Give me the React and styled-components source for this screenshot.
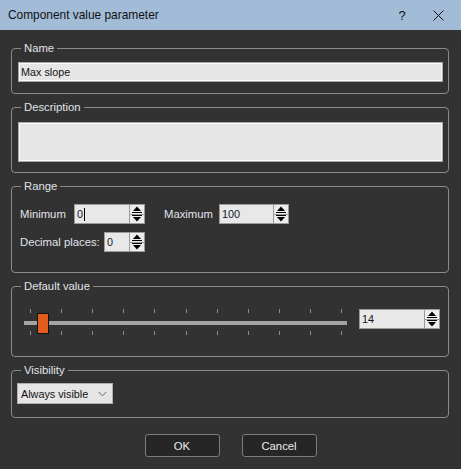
import React from "react";
import styled, { createGlobalStyle } from "styled-components";

const Global = createGlobalStyle`
  html, body {
    margin: 0;
    padding: 0;
    background: #323232;
  }
  body {
    font-family: "Liberation Sans", Arial, sans-serif;
    font-size: 11.3px;
    color: #e2e2e2;
  }
`;

const Window = styled.div`
  width: 461px;
  height: 469px;
  background: #323232;
  display: flex;
  flex-direction: column;
  overflow: hidden;
`;

const TitleBar = styled.div`
  height: 30px;
  flex: none;
  background: #a2bcd8;
  display: flex;
  align-items: center;
  padding-left: 8px;
  color: #111;
  font-size: 11.9px;
`;

const Title = styled.div`
  flex: 1;
`;

const TitleButton = styled.div`
  width: ${(p) => p.w}px;
  height: 30px;
  display: flex;
  align-items: center;
  justify-content: center;
  color: #111;
  font-size: 13px;
`;

const Body = styled.div`
  display: flex;
  flex-direction: column;
  gap: 6px;
  padding: 11px 12px 0 11px;
`;

const Group = styled.fieldset`
  margin: 0;
  min-width: 0;
  border: 1px solid #8a8a8a;
  border-radius: 4px;
  padding: ${(p) => p.pad || "7px 5px 11px 6px"};
`;

const Legend = styled.legend`
  margin-left: 3px;
  padding: 0 3px;
  line-height: 14px;
  color: #e0e4ea;
`;

const TextField = styled.div`
  box-sizing: border-box;
  height: ${(p) => p.h}px;
  background: #e6e6e6;
  border: 1px solid #a8a8a8;
  box-shadow: inset 0 0 0 1px #fbfbfb;
  color: #111;
  font-size: 10.8px;
  padding: 0 2px;
  line-height: ${(p) => p.h - 2}px;
`;

const Row = styled.div`
  display: flex;
  align-items: ${(p) => p.align || "center"};
  margin-top: ${(p) => p.top || 0}px;
`;

const FieldLabel = styled.div`
  width: ${(p) => p.w}px;
  margin-left: ${(p) => p.ml || 0}px;
  padding-left: 2px;
  box-sizing: border-box;
  white-space: nowrap;
  color: #e0e4ea;
`;

const SpinWrap = styled.div`
  box-sizing: border-box;
  width: ${(p) => p.w}px;
  height: 20px;
  display: flex;
  border: 1px solid #9b9b9b;
  background: #e8e8e8;
  margin-left: ${(p) => p.ml || 0}px;
`;

const SpinText = styled.div`
  flex: 1;
  color: #10142a;
  font-size: 10.8px;
  padding-left: 2px;
  line-height: 18px;
  display: flex;
  align-items: center;
`;

const Caret = styled.span`
  display: inline-block;
  width: 1px;
  height: 13px;
  background: #000;
  margin-left: 1px;
`;

const SpinButtons = styled.div`
  width: 14px;
  display: flex;
  flex-direction: column;
  border-left: 1px solid #9b9b9b;
`;

const SpinButton = styled.div`
  flex: 1;
  display: flex;
  align-items: center;
  justify-content: center;
  background: #ececec;
  & + & {
    border-top: 1px solid #9b9b9b;
  }
`;

const Arrow = ({ down }) => (
  <svg width="10" height="7" viewBox="0 0 10 7">
    {down ? (
      <>
        <rect x="0" y="0" width="10" height="1" fill="#000" />
        <polygon points="1,2 9,2 5,6.5" fill="#000" />
      </>
    ) : (
      <>
        <polygon points="5,0.5 9,5 1,5" fill="#000" />
        <rect x="0" y="6" width="10" height="1" fill="#000" />
      </>
    )}
  </svg>
);

const Spin = ({ w, value, caret, ml }) => (
  <SpinWrap w={w} ml={ml}>
    <SpinText>
      {value}
      {caret && <Caret />}
    </SpinText>
    <SpinButtons>
      <SpinButton>
        <Arrow />
      </SpinButton>
      <SpinButton>
        <Arrow down />
      </SpinButton>
    </SpinButtons>
  </SpinWrap>
);

const Slider = styled.div`
  position: relative;
  width: 323px;
  height: 27px;
  margin-left: 6px;
  margin-right: 12px;
`;

const Track = styled.div`
  position: absolute;
  left: 0;
  right: 0;
  top: 12px;
  height: 4px;
  background: #a3a3a3;
`;

const Tick = styled.div`
  position: absolute;
  width: 1px;
  height: 4px;
  background: #8a8a8a;
  top: ${(p) => (p.below ? 22 : 0)}px;
`;

const Handle = styled.div`
  position: absolute;
  top: 4px;
  width: 10px;
  height: 19px;
  background: #e25c1c;
  border: 1px solid #111;
`;

const Combo = styled.div`
  box-sizing: border-box;
  width: 96px;
  height: 21px;
  margin-left: -1px;
  background: #e5e5e5;
  border: 1px solid #b0b0b0;
  color: #111;
  font-size: 10.8px;
  display: flex;
  align-items: center;
  padding: 0 5px 0 3px;
  justify-content: space-between;
`;

const Buttons = styled.div`
  display: flex;
  justify-content: center;
  gap: 22px;
  margin-top: 10px;
  padding-left: 1px;
`;

const Button = styled.div`
  box-sizing: border-box;
  width: 75px;
  height: 23px;
  background: #262626;
  border: 1px solid #7c7c7c;
  border-radius: 3px;
  display: flex;
  align-items: center;
  justify-content: center;
  color: #ececec;
`;

const ticks = Array.from({ length: 11 }, (_, i) => 6 + i * 31.1);

export default function App() {
  const handleX = 13;
  return (
    <Window>
      <Global />
      <TitleBar>
        <Title>Component value parameter</Title>
        <TitleButton w={26}>?</TitleButton>
        <TitleButton w={46}>
          <svg width="11" height="11" viewBox="0 0 11 11">
            <path d="M0.5 0.5 L10.5 10.5 M10.5 0.5 L0.5 10.5" stroke="#111" strokeWidth="1" />
          </svg>
        </TitleButton>
      </TitleBar>
      <Body>
        <Group>
          <Legend>Name</Legend>
          <TextField h={20}>Max slope</TextField>
        </Group>
        <Group pad="8px 5px 10px 6px">
          <Legend>Description</Legend>
          <TextField h={40} />
        </Group>
        <Group pad="11px 5px 20px 6px">
          <Legend>Range</Legend>
          <Row>
            <FieldLabel w={56}>Minimum</FieldLabel>
            <Spin w={71} value="0" caret />
            <FieldLabel w={57} ml={17}>
              Maximum
            </FieldLabel>
            <Spin w={70} value="100" />
          </Row>
          <Row top={8}>
            <FieldLabel w={86}>Decimal places:</FieldLabel>
            <Spin w={41} value="0" />
          </Row>
        </Group>
        <Group pad="16px 5px 20px 6px">
          <Legend>Default value</Legend>
          <Row align="flex-start">
            <Slider>
              <Track />
              {ticks.map((x) => (
                <React.Fragment key={x}>
                  <Tick style={{ left: x }} />
                  <Tick below style={{ left: x }} />
                </React.Fragment>
              ))}
              <Handle style={{ left: handleX }} />
            </Slider>
            <Spin w={81} value="14" />
          </Row>
        </Group>
        <Group pad="6px 5px 13px 6px">
          <Legend>Visibility</Legend>
          <Combo>
            Always visible
            <svg width="9" height="6" viewBox="0 0 9 6">
              <path d="M0.5 0.8 L4.5 4.8 L8.5 0.8" fill="none" stroke="#666" strokeWidth="1" />
            </svg>
          </Combo>
        </Group>
        <Buttons>
          <Button>OK</Button>
          <Button>Cancel</Button>
        </Buttons>
      </Body>
    </Window>
  );
}
